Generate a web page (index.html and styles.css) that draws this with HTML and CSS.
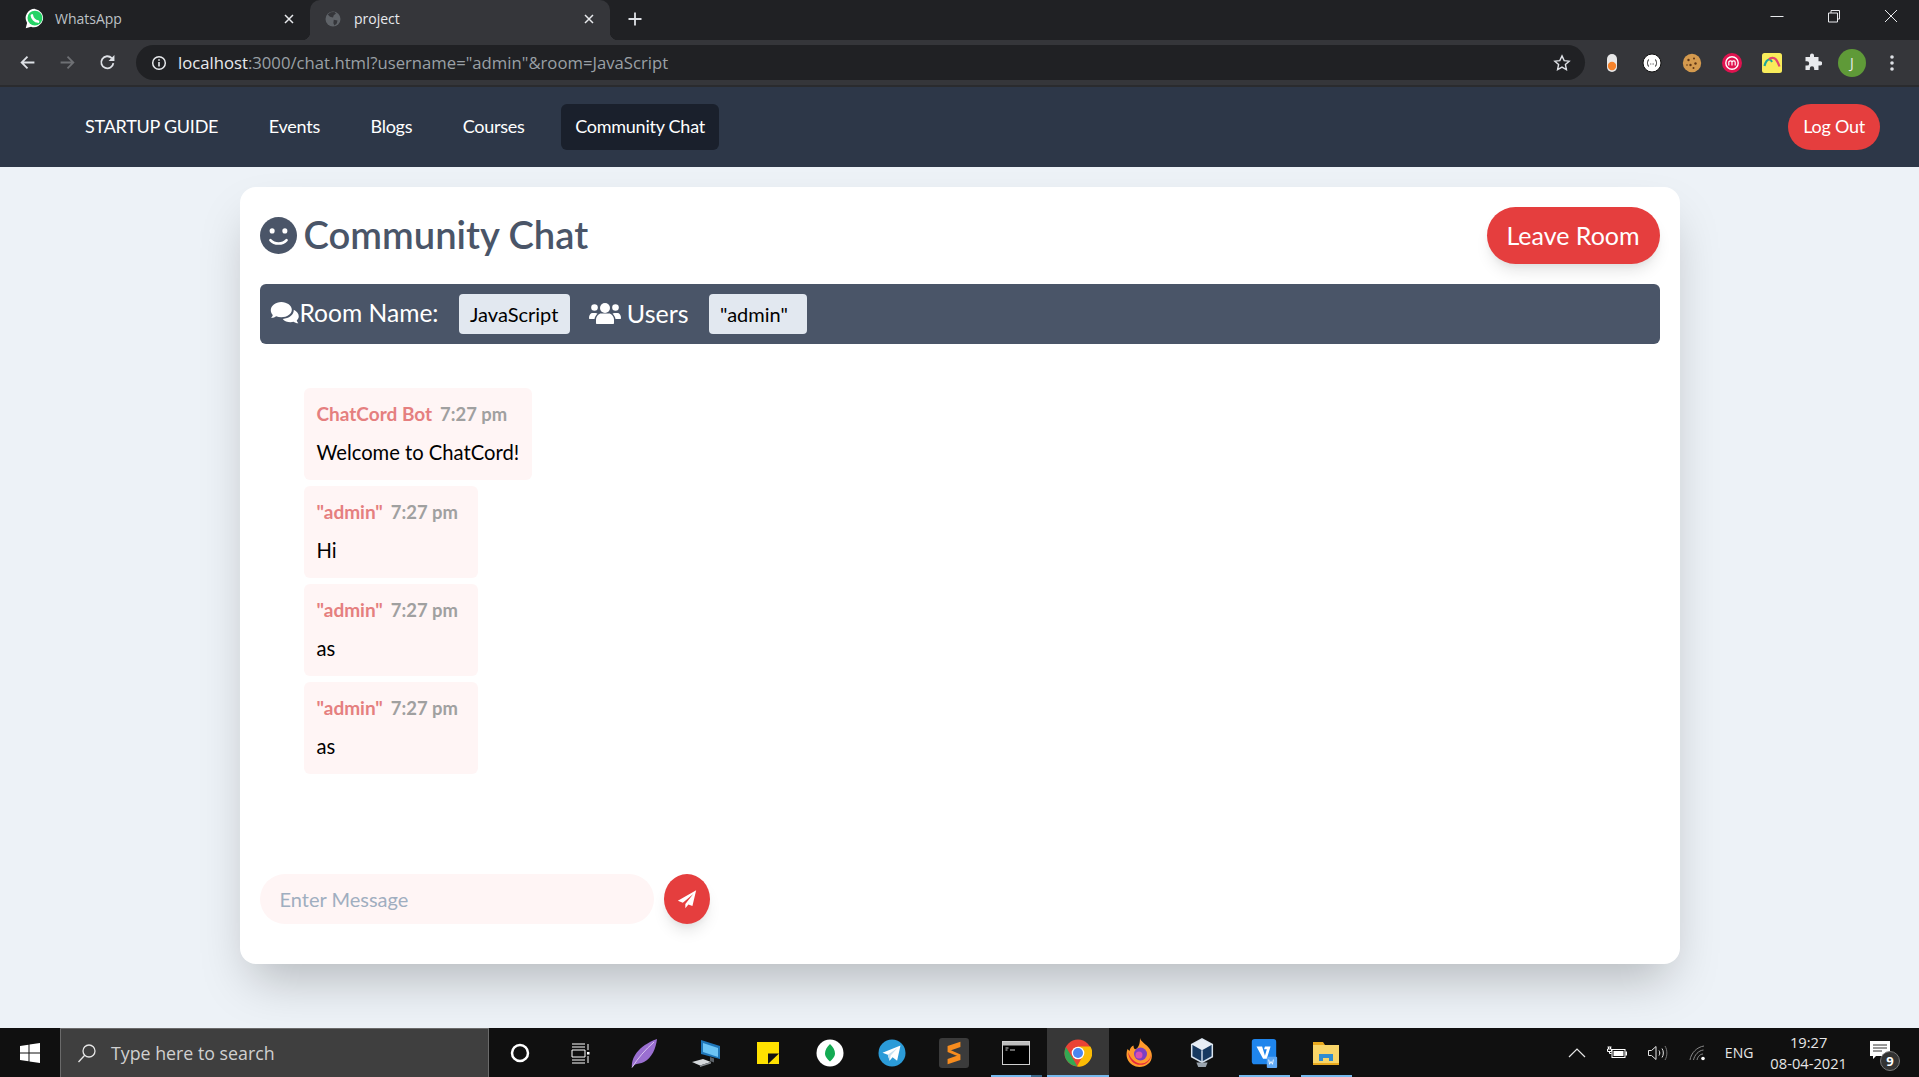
FILE: index.html
```html
<!DOCTYPE html>
<html lang="en">
<head>
    <meta charset="UTF-8">
    <meta name="viewport" content="width=device-width, initial-scale=1.0">
    <title>project</title>
    <link rel="stylesheet" href="styles.css">
</head>
<body>
    <div class="browser-tabs">
        <div class="tab">
            <svg class="tab-icon" viewBox="0 0 24 24"><path fill="#fff" d="M12.500 1A10.500 10.500 0 0 0 3.500 17L2 23l6-1.600A10.500 10.500 0 1 0 12.500 1z"/><circle cx="12.500" cy="11.500" r="8.500" fill="#25d366"/><path d="M9 8.500c.3 3.500 3.500 6.700 7 7" fill="none" stroke="#fff" stroke-width="3" stroke-linecap="round"/></svg>
            <span class="tab-title">WhatsApp</span>
            <svg class="tab-close" viewBox="0 0 10 10"><path d="M1 1l8 8M9 1L1 9" stroke="#e8eaed" stroke-width="1.500"/></svg>
        </div>
        <div class="tab tab-active">
            <svg class="tab-icon" viewBox="0 0 24 24"><circle cx="12" cy="12" r="10" fill="#5f6368"/><path fill="#35363a" d="M9 3l5-.5 2 2-3 2.500-1 3-4-1-3-3zM13 13l5 1-1 4-3 2.500-1.500-3z"/></svg>
            <span class="tab-title">project</span>
            <svg class="tab-close" viewBox="0 0 10 10"><path d="M1 1l8 8M9 1L1 9" stroke="#e8eaed" stroke-width="1.500"/></svg>
        </div>
        <svg class="new-tab" viewBox="0 0 16 16"><path d="M8 1.500v13M1.500 8h13" stroke="#dee1e6" stroke-width="1.800"/></svg>
        <div class="window-controls">
            <svg viewBox="0 0 16 16"><path d="M1.500 8.500h13" stroke="#e8eaed" stroke-width="1"/></svg>
            <svg viewBox="0 0 16 16"><path d="M2.500 5h9v9h-9zM5 5V2.500h8.500V11H11.500" fill="none" stroke="#e8eaed" stroke-width="1"/></svg>
            <svg viewBox="0 0 16 16"><path d="M2 2l12 12M14 2L2 14" stroke="#e8eaed" stroke-width="1"/></svg>
        </div>
    </div>

    <div class="browser-toolbar">
        <svg class="nav-arrow" viewBox="0 0 16 16"><path d="M14.500 8H2.500M8 2.500L2.500 8 8 13.500" fill="none" stroke="#dee1e6" stroke-width="1.700"/></svg>
        <svg class="nav-arrow" viewBox="0 0 16 16"><path d="M1.500 8h12M8 2.500L13.500 8 8 13.500" fill="none" stroke="#6e7074" stroke-width="1.700"/></svg>
        <svg class="nav-arrow" viewBox="0 0 16 16"><path d="M13.500 8.500A5.700 5.700 0 1 1 12 3.900" fill="none" stroke="#dee1e6" stroke-width="1.700"/><path d="M14.500 1v5.500H9z" fill="#dee1e6"/></svg>
        <div class="address-bar">
            <svg class="info-icon" viewBox="0 0 16 16"><circle cx="8" cy="8" r="6.300" fill="none" stroke="#e8eaed" stroke-width="1.500"/><path d="M8 7v4.500M8 4.300v1.500" stroke="#e8eaed" stroke-width="1.600"/></svg>
            <span class="url"><span class="url-host">localhost</span>:3000/chat.html?username="admin"&amp;room=JavaScript</span>
            <svg class="star-icon" viewBox="0 0 24 24"><path d="M12 3.500l2.600 5.600 6 .7-4.500 4.100 1.200 6L12 16.900l-5.300 3 1.200-6-4.500-4.100 6-.7z" fill="none" stroke="#dee1e6" stroke-width="1.700"/></svg>
        </div>
        <div class="extensions">
            <svg viewBox="0 0 20 20"><rect x="5" y="1" width="10" height="18" rx="5" fill="#e8e8e8"/><circle cx="10" cy="13" r="4.200" fill="#f5822a"/></svg>
            <svg viewBox="0 0 20 20"><circle cx="10" cy="10" r="9" fill="#fff" stroke="#111" stroke-width="1"/><path d="M7 6.500c-1.500 0-1 3.500-2 3.500 1 0 .5 3.500 2 3.500M13 6.500c1.500 0 1 3.500 2 3.500-1 0-.5 3.500-2 3.500" fill="none" stroke="#222" stroke-width="1"/><path d="M8.200 11h.8M9.700 11h.8M11.200 11h.8" stroke="#555" stroke-width="1"/></svg>
            <svg viewBox="0 0 20 20"><circle cx="10" cy="10" r="9.200" fill="#d49a4e"/><circle cx="6.500" cy="7" r="1.200" fill="#5e3516"/><circle cx="12" cy="5.500" r="1" fill="#5e3516"/><circle cx="13.500" cy="10.500" r="1.200" fill="#5e3516"/><circle cx="8.500" cy="12" r="1.200" fill="#5e3516"/><circle cx="11.500" cy="15" r="1" fill="#5e3516"/><circle cx="5" cy="12" r=".8" fill="#5e3516"/></svg>
            <svg viewBox="0 0 20 20"><circle cx="10" cy="10" r="10" fill="#e0134f"/><circle cx="10" cy="10" r="6.200" fill="none" stroke="#fff" stroke-width="1.400"/><path d="M6.800 12.500V8.200M6.800 9c1-1.500 3.200-1.500 3.200.5v3M10 9c1-1.500 3.200-1.500 3.200.5v3" fill="none" stroke="#fff" stroke-width="1.200"/></svg>
            <svg viewBox="0 0 20 20"><rect x="0" y="0" width="20" height="20" rx="2.500" fill="#f8ec5b"/><path d="M2.500 13c1-4 3-6.500 5-6.500 1.500 0 2 1.500 2.500 2.500" fill="none" stroke="#1ca79a" stroke-width="2.200"/><path d="M7 6.500c1.500-2 5-2.500 7 0 1.500 2 2.500 4 3.500 7" fill="none" stroke="#e2466f" stroke-width="2.200"/></svg>
            <svg viewBox="0 0 20 20"><path fill="#e8eaed" d="M8 2.500a2 2 0 0 1 4 0V4h4.500v4.200H18a2.200 2.200 0 0 1 0 4.400h-1.500V17h-4.300v-1.500a2.200 2.200 0 0 0-4.400 0V17H3.500v-4.400H5a2.200 2.200 0 0 0 0-4.400H3.500V4H8z"/></svg>
            <span class="profile">J</span>
            <svg viewBox="0 0 20 20"><circle cx="10" cy="4" r="1.800" fill="#dee1e6"/><circle cx="10" cy="10" r="1.800" fill="#dee1e6"/><circle cx="10" cy="16" r="1.800" fill="#dee1e6"/></svg>
        </div>
    </div>

    <nav class="navbar">
        <a class="nav-link">STARTUP GUIDE</a>
        <a class="nav-link">Events</a>
        <a class="nav-link">Blogs</a>
        <a class="nav-link">Courses</a>
        <a class="nav-link nav-link-active">Community Chat</a>
        <a class="logout-btn">Log Out</a>
    </nav>

    <main class="page">
        <div class="chat-card">
            <header class="chat-header">
                <h1>
                    <svg class="smile-icon" viewBox="0 0 32 32"><circle cx="16" cy="16" r="16" fill="#4a5568"/><circle cx="10.500" cy="12" r="2.200" fill="#fff"/><circle cx="21.500" cy="12" r="2.200" fill="#fff"/><path d="M9 20c3.500 4 10.500 4 14 0" fill="none" stroke="#fff" stroke-width="2.200" stroke-linecap="round"/></svg>
                    <span class="chat-title">Community Chat</span>
                </h1>
                <button class="leave-btn">Leave Room</button>
            </header>

            <div class="room-bar">
                <svg class="comments-icon" viewBox="0 0 32 26"><path fill="#fff" d="M12 1C5.700 1 .6 5 .6 10c0 2 .8 3.800 2.200 5.300-.5 1.800-1.800 3.200-1.800 3.200 2.400-.1 4.300-1 5.500-1.900 1.700.7 3.500 1 5.500 1 6.300 0 11.400-3.600 11.400-8.100S18.300 1 12 1z"/><path fill="#fff" d="M25.500 9.500c.3 5.300-5.200 9.600-12 9.900 1.900 2.300 5 3.600 8.500 3.600 1 0 2.200-.1 3.200-.5 1.300.9 3 1.700 5.300 1.700 0 0-1.300-1.400-1.800-3 1.400-1.300 2.200-3 2.200-4.700 0-3-2.300-5.600-5.400-7z"/></svg>
                <span class="room-label">Room Name:</span>
                <span class="chip">JavaScript</span>
                <svg class="users-icon" viewBox="0 0 32 22"><g fill="#fff"><circle cx="16" cy="6" r="5"/><circle cx="5.500" cy="5.500" r="3.300"/><circle cx="26.500" cy="5.500" r="3.300"/><path d="M7 21v-3c0-4 3-6.500 5-6.500h8c2 0 5 2.500 5 6.500v3c0 .6-.4 1-1 1H8c-.6 0-1-.4-1-1z"/><path d="M0 16c0-3 1.500-5 3.500-5h3c.8 0 1.500.3 2 .7C7 13 5.700 15 5.500 17H1c-.6 0-1-.4-1-1zM32 16c0-3-1.500-5-3.500-5h-3c-.8 0-1.500.3-2 .7 1.500 1.300 2.800 3.300 3 5.300H31c.6 0 1-.4 1-1z"/></g></svg>
                <span class="room-label users-label">Users</span>
                <span class="chip chip-user">"admin"</span>
            </div>

            <div class="messages">
                <div class="message">
                    <p class="meta"><span class="author">ChatCord Bot</span><span class="time">7:27 pm</span></p>
                    <p class="text">Welcome to ChatCord!</p>
                </div>
                <div class="message">
                    <p class="meta"><span class="author">"admin"</span><span class="time">7:27 pm</span></p>
                    <p class="text">Hi</p>
                </div>
                <div class="message">
                    <p class="meta"><span class="author">"admin"</span><span class="time">7:27 pm</span></p>
                    <p class="text">as</p>
                </div>
                <div class="message">
                    <p class="meta"><span class="author">"admin"</span><span class="time">7:27 pm</span></p>
                    <p class="text">as</p>
                </div>
            </div>

            <form class="send-form">
                <input class="msg-input" type="text" placeholder="Enter Message">
                <button class="send-btn" type="button">
                    <svg viewBox="0 0 24 24"><path fill="#fff" d="M23 1.500L1 14l6 2.500L19.500 6 10 18v5l3.700-4.500 4.800 2z"/></svg>
                </button>
            </form>
        </div>
    </main>

    <footer class="taskbar">
        <div class="start-btn">
            <svg viewBox="0 0 20 20"><path fill="#fff" d="M0 3l8.500-1.200V9.500H0zM9.500 1.600L20 0v9.500H9.500zM0 10.500h8.500v7.700L0 17zM9.500 10.500H20V20L9.500 18.400z"/></svg>
        </div>
        <div class="search-box">
            <svg viewBox="0 0 20 20"><circle cx="12" cy="8" r="6" fill="none" stroke="#e6e6e6" stroke-width="1.300"/><path d="M7.700 12.300L1.500 19" stroke="#e6e6e6" stroke-width="1.300"/></svg>
            <span>Type here to search</span>
        </div>
        <div class="task-icons">
            <div class="task-icon"><svg viewBox="0 0 24 24"><circle cx="12" cy="12" r="8" fill="none" stroke="#fff" stroke-width="2.500"/></svg></div>
            <div class="task-icon"><svg viewBox="2 0 24 24"><path d="M4 3h13M4 6h13M4 9h13v7H4zM4 19h13M4 22h13M20 3v6M20 15v7" fill="none" stroke="#fff" stroke-width="1"/><rect x="19" y="11" width="2.500" height="2.500" fill="#fff"/></svg></div>
            <div class="task-icon"><svg class="task-big" viewBox="0 0 28 30"><path fill="#9a6fd0" d="M2 29.500C1 20 8 8 27 1c-1 9-5 19-13 23-3 1.500-7 1.500-9 2.500z"/><path d="M2 29.500C8 20 15 12 24 4" stroke="#d9c5f0" stroke-width="1" fill="none"/></svg></div>
            <div class="task-icon"><svg class="task-big" viewBox="0 0 28 30"><path fill="#1f76b8" d="M9 2l19 6v13L9 16z"/><path fill="#6cc4f5" d="M11 5l15 5v9l-15-5z"/><path fill="#5a6066" d="M18 19l4 1.500v4l-4-1.500z"/><path fill="#d5d8db" d="M0 24l11-3 8 3-11 3.500z"/><path fill="#8b9095" d="M8 27.500l11-3.500v1.500L8 29z"/></svg></div>
            <div class="task-icon"><svg viewBox="0 0 24 24"><path fill="#ffe100" d="M1 1h22v22H1z"/><path fill="#111" d="M12 23V12.500h11z"/></svg></div>
            <div class="task-icon"><svg class="task-big" viewBox="0 0 28 28"><circle cx="14" cy="14" r="13.500" fill="#fff"/><path fill="#13aa52" d="M14 5c3 3 5 6 5 9.500 0 3.500-3 6-5 8-2-2-5-4.500-5-8C9 11 11 8 14 5z"/></svg></div>
            <div class="task-icon"><svg class="task-big" viewBox="0 0 28 28"><circle cx="14" cy="14" r="13.500" fill="#2b9bd8"/><path fill="#fff" d="M22.500 6.500L4.500 13.800l5.300 1.900 1.800 6 3-3.400 4.500 3.400z"/><path fill="#c4dff0" d="M9.800 15.700L19.500 9l-6.800 7.500-1.100 5.200z"/></svg></div>
            <div class="task-icon"><svg class="task-xl" viewBox="0 0 28 28"><rect width="28" height="28" rx="3" fill="#3b3b3b"/><path fill="#f78c1e" d="M8 7.500l12-4v5L8 12.500zM20 20.500l-12 4v-5l12-4zM8 10l12 5.500v2.500L8 13z"/></svg></div>
            <div class="task-icon task-open task-split"><svg class="task-big" viewBox="0 0 28 28"><rect x=".5" y="2.500" width="27" height="23" fill="#000" stroke="#cfcfcf"/><rect x="1" y="3" width="26" height="3.500" fill="#bdbdbd"/><path d="M3.500 9h3M3.500 11h2M8 11h5" stroke="#ccc" stroke-width="1"/></svg></div>
            <div class="task-icon task-active"><svg class="task-big" viewBox="0 0 28 28"><circle cx="14" cy="14" r="13.500" fill="#ea4335"/><path fill="#fbbc05" d="M14 7.500h12.400A13.500 13.500 0 0 1 13 27.500l6-11z"/><path fill="#34a853" d="M1.900 8l7 11.500 4.500 8A13.500 13.500 0 0 1 1.900 8z"/><circle cx="14" cy="14" r="6.300" fill="#fff"/><circle cx="14" cy="14" r="5" fill="#4a85ef"/></svg></div>
            <div class="task-icon"><svg class="task-big" viewBox="0 0 28 30"><path fill="#ff9a2c" d="M14 0c1 4 6 6 9 10 4 5 4 12-1 16-4 3.500-11 4-15.500 1C1.500 24-1 18 1.500 11l2 2c.5-3 2-4.500 4-5.500C7.500 11 9 11.500 10 11c3-2 4-6 4-11z"/><path fill="#e5263f" d="M2 14c1 10 9 15 17 12 3-1.500 6-5 6-9-1 6-7 10-13 8C7 23 4 19 2 14z"/><circle cx="14.500" cy="16" r="6.500" fill="#7c3fc4"/><circle cx="13" cy="17" r="3.500" fill="#d94fb2"/></svg></div>
            <div class="task-icon"><svg class="task-big" viewBox="0 0 28 32"><path fill="#183a61" stroke="#d8e3ef" stroke-width="1.600" d="M14 1l11 6v13l-11 6-11-6V7z"/><path fill="#e8eef5" d="M14 1l11 6-11 6L3 7z"/><path d="M14 13v13" stroke="#d8e3ef" stroke-width="1.500"/><path fill="#9aa4ae" d="M8 26h12l-2 5h-8z"/></svg></div>
            <div class="task-icon task-open"><svg class="task-big" viewBox="0 0 28 32"><rect x="1" y="1" width="26" height="27" rx="3" fill="#1f85ec"/><path d="M6 9h6l3 10 2-7h-3l1-3h6l-4 13h-4z" fill="#fff"/><rect x="17" y="20" width="11" height="12" rx="1" fill="#5fa8f5"/><path d="M19 23l1 5 1.500-3 1.500 3 1-5" stroke="#fff" fill="none" stroke-width=".9"/></svg></div>
            <div class="task-icon task-open"><svg class="task-big" viewBox="0 0 28 26"><path fill="#e9a91e" d="M1 2h10l2 3h-12z"/><path fill="#f8d569" d="M1 5h26v20H1z"/><path fill="#2f8cd0" d="M7 21v-7h14v7h-4v-3h-6v3z"/><path fill="#e9a91e" d="M1 23h26v2H1z"/></svg></div>
        </div>
        <div class="tray">
            <svg class="tray-chevron" viewBox="0 0 18 10"><path d="M1 9l8-8 8 8" fill="none" stroke="#e6e6e6" stroke-width="1.200"/></svg>
            <svg class="tray-battery" viewBox="0 0 22 14"><path d="M1.500 1h4M2.500 1v2M4.500 1v2M1.500 3h4v2.500h-4zM3.500 5.500v2h2" fill="none" stroke="#fff" stroke-width="1"/><rect x="6" y="3.500" width="13" height="8" fill="#101010" stroke="#fff"/><rect x="7.500" y="5" width="10" height="5" fill="#fff"/><rect x="19.500" y="5.500" width="1.500" height="4" fill="#fff"/></svg>
            <svg class="tray-sound" viewBox="0 0 22 16"><path d="M1.500 5.500h3L9 1.500v13l-4.500-4h-3z" fill="none" stroke="#e6e6e6"/><path d="M12 5.500c1 1.500 1 3.500 0 5M15 3.500c1.800 2.500 1.800 6.500 0 9" fill="none" stroke="#e6e6e6"/><path d="M18 1c2.500 4 2.500 10 0 14" fill="none" stroke="#777"/></svg>
            <svg class="tray-wifi" viewBox="0 0 20 16"><path d="M1 15C2 8 8 2 15 1M4.500 15C5.500 10 9.500 5.500 14.500 5M8 15c.5-3 3-6 6-6" fill="none" stroke="#888" stroke-width="1"/><circle cx="14" cy="13.500" r="1.800" fill="#fff"/></svg>
            <span class="tray-lang">ENG</span>
            <div class="tray-clock"><span>19:27</span><span>08-04-2021</span></div>
            <div class="tray-notify">
                <svg viewBox="0 0 22 20"><path fill="#fff" d="M0 0h20v15H6l-3 3v-3H0z"/><path d="M3 4h14M3 7h14M3 10h9" stroke="#333" stroke-width="1"/></svg>
                <span class="notify-badge">9</span>
            </div>
        </div>
    </footer>
</body>
</html>
```

FILE: styles.css
```css
* {
    box-sizing: border-box;
}
html, body {
    height: 100%;
}
body {
    margin: 0;
    display: flex;
    flex-direction: column;
    height: 1077px;
    overflow: hidden;
    background-color: #edf2f7;
    font-family: Lato, "Liberation Sans", sans-serif;
}

/* browser chrome */
.browser-tabs {
    display: flex;
    align-items: center;
    height: 40px;
    background-color: #202124;
    color: #e8eaed;
    font-family: "Open Sans", sans-serif;
    font-size: 14px;
}
.tab {
    position: relative;
    display: flex;
    align-items: center;
    width: 310px;
    height: 40px;
    padding: 0 12px 3px 24px;
    color: #bdc1c6;
}
.tab-active {
    width: 300px;
    background-color: #35363a;
    border-radius: 10px 10px 0 0;
    color: #e8eaed;
    padding-left: 14px;
}
.tab-active::before,
.tab-active::after {
    content: "";
    position: absolute;
    bottom: 0;
    width: 8px;
    height: 8px;
}
.tab-active::before {
    left: -8px;
    background: radial-gradient(circle at 0 0, transparent 8px, #35363a 8.5px);
}
.tab-active::after {
    right: -8px;
    background: radial-gradient(circle at 100% 0, transparent 8px, #35363a 8.5px);
}
.tab-icon {
    width: 21px;
    height: 21px;
    margin-right: 10px;
    flex-shrink: 0;
}
.tab-active .tab-icon {
    width: 18px;
    height: 18px;
    margin-right: 12px;
}
.tab-title {
    flex: 1;
}
.tab-close {
    width: 10px;
    height: 10px;
    margin-right: 4px;
}
.new-tab {
    width: 16px;
    height: 16px;
    margin-left: 17px;
    margin-bottom: 2px;
}
.window-controls {
    display: flex;
    gap: 41px;
    margin-left: auto;
    margin-right: 20px;
    margin-top: -8px;
}
.window-controls svg {
    width: 16px;
    height: 16px;
}
.browser-toolbar {
    display: flex;
    align-items: center;
    height: 47px;
    padding: 0 17px 0 19px;
    background-color: #35363a;
    border-bottom: 2px solid #2a2b2e;
}
.nav-arrow {
    width: 17px;
    height: 17px;
    margin-right: 23px;
    flex-shrink: 0;
}
.nav-arrow:nth-child(3) {
    margin-right: 20px;
}
.address-bar {
    display: flex;
    align-items: center;
    width: 1452px;
    height: 35px;
    padding: 0 13px 0 15px;
    background-color: #202124;
    border-radius: 18px;
}
.info-icon {
    width: 16px;
    height: 16px;
    margin-right: 11px;
}
.url {
    flex: 1;
    font-family: "Open Sans", sans-serif;
    font-size: 16.7px;
    color: #9aa0a6;
}
.url-host {
    color: #e8eaed;
}
.star-icon {
    width: 20px;
    height: 20px;
}
.extensions {
    display: flex;
    align-items: center;
    gap: 20px;
    margin-left: 17px;
}
.extensions svg {
    width: 20px;
    height: 20px;
}
.profile {
    display: flex;
    align-items: center;
    justify-content: center;
    width: 28px;
    height: 28px;
    margin: 0 -4px;
    border-radius: 50%;
    background-color: #5f9a38;
    color: #e8eaed;
    font-family: "Open Sans", sans-serif;
    font-size: 14px;
}

/* site nav */
.navbar {
    display: flex;
    align-items: center;
    gap: 22.5px;
    height: 80px;
    padding: 0 39px 0 71px;
    background-color: #2d3748;
    flex-shrink: 0;
}
.nav-link {
    padding: 0 14px;
    height: 46px;
    line-height: 45px;
    border-radius: 6px;
    color: #fff;
    font-size: 18px;
    letter-spacing: -0.25px;
}
.nav-link-active {
    background-color: #1a202c;
}
.logout-btn {
    margin-left: auto;
    padding: 0 15px;
    height: 46px;
    line-height: 45px;
    border-radius: 23px;
    background-color: #e53e3e;
    color: #fff;
    font-size: 18px;
    letter-spacing: -0.25px;
}

/* chat card */
.page {
    flex: 1;
    display: flex;
    justify-content: center;
    padding-top: 20px;
    min-height: 0;
}
.chat-card {
    display: flex;
    flex-direction: column;
    width: 1440px;
    height: 777px;
    padding: 20px;
    background-color: #fff;
    border-radius: 16px;
    box-shadow: 0 25px 50px -12px rgba(0, 0, 0, 0.25);
}
.chat-header {
    display: flex;
    align-items: center;
    justify-content: space-between;
    margin-bottom: 20px;
}
.chat-header h1 {
    display: flex;
    align-items: center;
    gap: 7px;
    margin: 0;
    font-size: 38.2px;
    font-weight: 600;
    color: #4a5568;
}
.chat-title {
    padding-bottom: 4px;
}
.smile-icon {
    width: 37px;
    height: 37px;
}
.leave-btn {
    width: 173px;
    height: 57px;
    padding: 0 0 2px;
    border: none;
    border-radius: 29px;
    background-color: #e53e3e;
    color: #fff;
    font-family: inherit;
    font-size: 25px;
    box-shadow: 0 10px 15px -3px rgba(0, 0, 0, 0.1), 0 4px 6px -2px rgba(0, 0, 0, 0.05);
}
.room-bar {
    display: flex;
    align-items: center;
    height: 60px;
    padding: 0 10px;
    background-color: #4a5568;
    border-radius: 6px;
    color: #fff;
}
.comments-icon {
    width: 30px;
    height: 24px;
    margin-bottom: 3px;
}
.room-label {
    font-size: 24.6px;
    margin-right: 20px;
    margin-bottom: 3px;
}
.chip {
    padding: 0 11.5px;
    height: 40px;
    line-height: 40px;
    background-color: #e2e8f0;
    border-radius: 4px;
    color: #000;
    font-size: 20px;
}
.users-icon {
    width: 32px;
    height: 22px;
    margin-left: 19px;
    margin-right: 6px;
    margin-bottom: 3px;
}
.users-label {
    font-size: 25px;
}
.chip-user {
    width: 98px;
}
.messages {
    flex: 1;
    display: flex;
    flex-direction: column;
    align-items: flex-start;
    gap: 6px;
    padding: 44px 44px 0;
}
.message {
    height: 92px;
    padding: 13px 13px;
    background-color: #fff5f5;
    border-radius: 6px;
}
.meta {
    display: flex;
    align-items: baseline;
    gap: 8px;
    margin: 0 0 11px;
    padding-right: 7px;
    line-height: 26px;
}
.author {
    color: #e57f7f;
    font-size: 19px;
    font-weight: 700;
}
.time {
    color: #a0a0a0;
    font-size: 18.4px;
    font-weight: 700;
}
.text {
    margin: 0;
    font-size: 20.2px;
    line-height: 28px;
    color: #000;
}
.send-form {
    display: flex;
    gap: 10px;
    margin-bottom: 20px;
}
.msg-input {
    width: 394px;
    height: 50px;
    padding: 0 20px;
    border: none;
    border-radius: 25px;
    background-color: #fff5f5;
    font-family: inherit;
    font-size: 20px;
}
.msg-input::placeholder {
    color: #a0aec0;
}
.send-btn {
    display: flex;
    align-items: center;
    justify-content: center;
    width: 46px;
    height: 50px;
    padding: 0;
    border: none;
    border-radius: 50%;
    background-color: #e53e3e;
    box-shadow: 0 10px 15px -3px rgba(0, 0, 0, 0.1), 0 4px 6px -2px rgba(0, 0, 0, 0.05);
}
.send-btn svg {
    width: 20px;
    height: 20px;
}

/* windows taskbar */
.taskbar {
    display: flex;
    align-items: center;
    height: 49px;
    background-color: #101010;
    flex-shrink: 0;
    color: #e6e6e6;
    font-family: "Open Sans", sans-serif;
}
.start-btn {
    display: flex;
    align-items: center;
    justify-content: center;
    width: 60px;
}
.start-btn svg {
    width: 20px;
    height: 20px;
}
.search-box {
    display: flex;
    align-items: center;
    gap: 14px;
    width: 429px;
    height: 49px;
    padding-left: 16px;
    background-color: #3f3f3f;
    border: 1px solid #6a6a6a;
    border-bottom: none;
    font-size: 17.8px;
    color: #d0d0d0;
}
.search-box svg {
    width: 20px;
    height: 20px;
}
.task-icons {
    display: flex;
    height: 49px;
}
.task-icon {
    display: flex;
    align-items: center;
    justify-content: center;
    width: 62px;
    height: 49px;
}
.task-icon svg {
    width: 24px;
    height: 24px;
}
.task-icon .task-big {
    width: 28px;
    height: 30px;
}
.task-icon .task-xl {
    width: 30px;
    height: 30px;
}
.task-open {
    background: linear-gradient(#76b9ed, #76b9ed) center bottom / 51px 2px no-repeat;
}
.task-split {
    background: linear-gradient(to right, #76b9ed 40px, #3d6a8c 40px) center bottom / 51px 2px no-repeat;
}
.task-active {
    background: linear-gradient(#76b9ed, #76b9ed) center bottom / 100% 2px no-repeat, #373737;
}
.tray {
    display: flex;
    align-items: center;
    margin-left: auto;
    height: 49px;
    padding-right: 23px;
    font-size: 14px;
}
.tray-chevron {
    width: 18px;
    height: 10px;
    margin-right: 20px;
}
.tray-battery {
    width: 22px;
    height: 14px;
    margin-right: 19px;
}
.tray-sound {
    width: 22px;
    height: 16px;
    margin-right: 20px;
}
.tray-wifi {
    width: 20px;
    height: 16px;
    margin-right: 16px;
}
.tray-lang {
    margin-right: 17px;
}
.tray-clock {
    display: flex;
    flex-direction: column;
    align-items: center;
    margin-right: 23px;
    font-size: 14.7px;
    line-height: 21px;
}
.tray-notify {
    position: relative;
    width: 26px;
    height: 24px;
}
.tray-notify svg {
    width: 22px;
    height: 20px;
}
.notify-badge {
    position: absolute;
    right: -4px;
    bottom: -6px;
    width: 20px;
    height: 20px;
    border: 1px solid #777;
    border-radius: 50%;
    background-color: #333;
    color: #fff;
    font-size: 13px;
    font-weight: 700;
    line-height: 18px;
    text-align: center;
}
```
